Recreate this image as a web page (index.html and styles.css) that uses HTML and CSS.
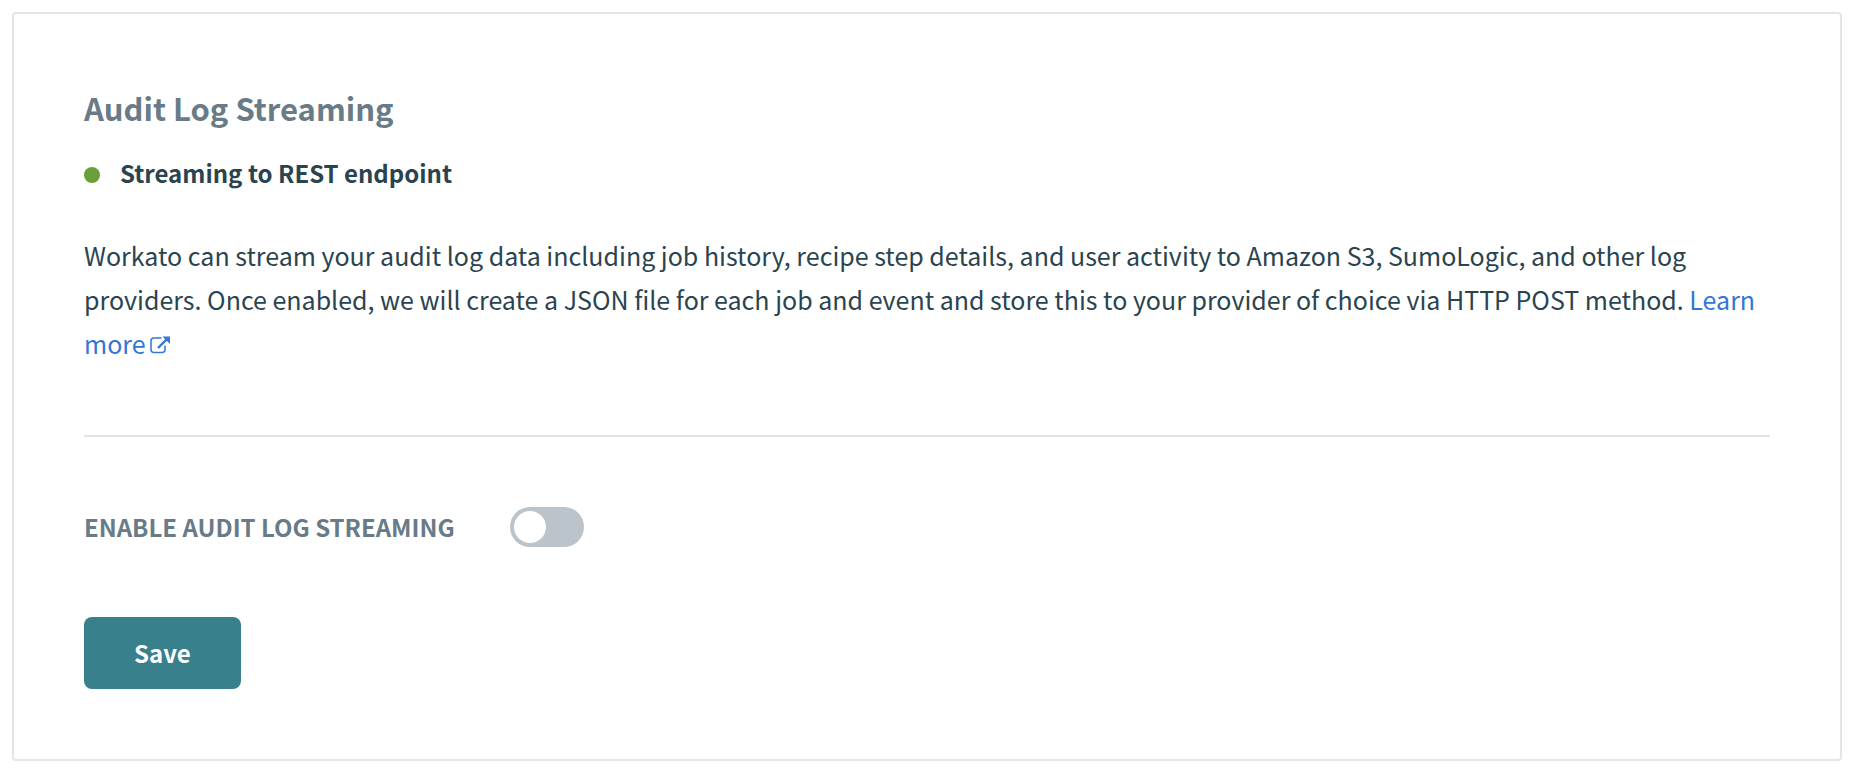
FILE: index.html
```
<!DOCTYPE html>
<html lang="en">
<head>
<meta charset="utf-8">
<title>Audit Log Streaming</title>
<link rel="stylesheet" href="styles.css">
</head>
<body>
<main class="card">
  <header class="intro">
    <h1 class="title">Audit Log Streaming</h1>
    <p class="status"><span class="status-dot"></span>Streaming to REST endpoint</p>
    <p class="description">Workato can stream your audit log data including job history, recipe step details, and user activity to Amazon S3, SumoLogic, and other log providers. Once enabled, we will create a JSON file for each job and event and store this to your provider of choice via HTTP POST method. <a class="link" href="#">Learn more<svg class="link-icon" viewBox="0 0 20 18" aria-hidden="true"><path d="M11.5 2H4Q1 2 1 5V13.500Q1 16.500 4 16.500H12Q15 16.500 15 13.500V9.500" fill="none" stroke="currentColor" stroke-width="1.500"/><path d="M8 12L16.500 3.500" fill="none" stroke="currentColor" stroke-width="2.400"/><path d="M12.500 0.500H20V8Z" fill="currentColor"/></svg></a></p>
  </header>
  <form class="settings">
    <div class="toggle-row">
      <label class="toggle-label" for="enable">ENABLE AUDIT LOG STREAMING</label>
      <input class="toggle" id="enable" type="checkbox" role="switch">
    </div>
    <button class="save" type="button">Save</button>
  </form>
</main>
</body>
</html>
```
FILE: styles.css
```
* {
  box-sizing: border-box;
}

body {
  margin: 12px 8px 10px 12px;
  background: #fff;
  color: #2a444f;
  font-family: "Noto Sans CJK SC", "Noto Sans", sans-serif;
  font-size: 25px;
  line-height: 44px;
}

.card {
  padding: 70px;
  border: 2px solid #e1e6ea;
  border-radius: 4px;
}

.intro {
  padding-bottom: 70px;
  border-bottom: 2px solid #e1e6ea;
}

.title {
  margin: 0;
  color: #687b87;
  font-size: 31px;
  font-weight: 700;
  line-height: 48px;
}

.status {
  display: flex;
  align-items: baseline;
  gap: 20px;
  margin: 19px 0 38px;
  font-size: 24px;
  font-weight: 700;
}

.status-dot {
  width: 16px;
  height: 16px;
  border-radius: 50%;
  background: #6a9f3a;
}

.description {
  margin: 0;
}

.link {
  color: #3276d6;
  text-decoration: none;
}

.link-icon {
  width: 20px;
  height: 18px;
  margin-left: 4px;
}

.settings {
  display: flex;
  flex-direction: column;
  align-items: flex-start;
  gap: 68px;
  padding-top: 68px;
}

.toggle-row {
  display: flex;
  align-items: center;
  gap: 55px;
}

.toggle-label {
  color: #687b87;
  font-size: 24px;
  font-weight: 700;
}

.toggle {
  appearance: none;
  display: flex;
  width: 74px;
  height: 40px;
  margin: 0;
  padding: 4px;
  border-radius: 20px;
  background: #bbc3cb;
}

.toggle::before {
  content: "";
  width: 32px;
  height: 32px;
  border-radius: 50%;
  background: #fff;
}

.toggle:checked {
  justify-content: flex-end;
  background: #39808d;
}

.save {
  padding: 14px 50px;
  border: 0;
  border-radius: 8px;
  background: #39808d;
  color: #fff;
  font: inherit;
  font-size: 24px;
  font-weight: 700;
}
```
